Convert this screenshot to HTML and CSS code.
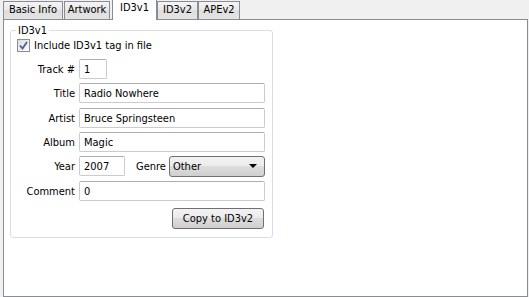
FILE: index.html
```html
<!DOCTYPE html>
<html lang="en">
<head>
    <meta charset="UTF-8">
    <title>Tag Editor - ID3v1</title>
    <link rel="stylesheet" href="styles.css">
</head>
<body>
    <div class="tabs">
        <div class="tab tab-basic">Basic Info</div>
        <div class="tab tab-artwork">Artwork</div>
        <div class="tab tab-active">ID3v1</div>
        <div class="tab tab-id3v2">ID3v2</div>
        <div class="tab tab-apev2">APEv2</div>
    </div>

    <div class="panel">
        <fieldset class="group">
            <legend>ID3v1</legend>

            <label class="check">
                <span class="box">
                    <svg width="9" height="9" viewBox="0 0 9 9">
                        <path d="M1 4.5 L3.5 7.5 L8 1" fill="none" stroke="#4a5f97" stroke-width="1.8"/>
                    </svg>
                </span>
                Include ID3v1 tag in file
            </label>

            <div class="row">
                <span class="lbl">Track #</span>
                <input class="field field-track" value="1">
            </div>
            <div class="row">
                <span class="lbl">Title</span>
                <input class="field field-wide" value="Radio Nowhere">
            </div>
            <div class="row row-loose">
                <span class="lbl">Artist</span>
                <input class="field field-wide" value="Bruce Springsteen">
            </div>
            <div class="row">
                <span class="lbl">Album</span>
                <input class="field field-wide" value="Magic">
            </div>
            <div class="row">
                <span class="lbl">Year</span>
                <input class="field field-year" value="2007">
                <span class="lbl-genre">Genre</span>
                <div class="combo">
                    <span>Other</span>
                    <span class="arrow"></span>
                </div>
            </div>
            <div class="row row-loose">
                <span class="lbl">Comment</span>
                <input class="field field-wide" value="0">
            </div>

            <div class="actions">
                <button class="btn">Copy to ID3v2</button>
            </div>
        </fieldset>
    </div>
</body>
</html>
```

FILE: styles.css
```css
body {
    margin: 0;
    width: 529px;
    height: 297px;
    background-color: #f0f0f0;
    font-family: 'DejaVu Sans Condensed', 'Liberation Sans', sans-serif;
    font-size: 11px;
    color: #000;
    overflow: hidden;
}

/* tab strip */
.tabs {
    display: flex;
    align-items: flex-end;
    height: 19px;
    padding-left: 3px;
    position: relative;
    z-index: 1;
}
.tab {
    box-sizing: border-box;
    height: 18px;
    border: 1px solid #898c95;
    border-bottom: none;
    background: linear-gradient(#f4f4f4, #e8e8e8 50%, #dedede 50%, #e4e4e4);
    text-align: center;
    line-height: 16px;
}
.tab-basic { width: 60px; margin-right: 1px; }
.tab-artwork { width: 46px; margin-right: 2px; }
.tab-active {
    width: 45px;
    height: 20px;
    background: #fff;
    line-height: 15px;
    margin-bottom: -1px;
    height: 21px;
}
.tab-id3v2 { width: 41px; }
.tab-apev2 { width: 42px; }

/* page body */
.panel {
    box-sizing: border-box;
    margin-left: 3px;
    width: 525px;
    height: 278px;
    border: 1px solid #898c95;
    background-color: #fff;
    padding: 4px 0 0 6px;
}

.group {
    box-sizing: border-box;
    width: 263px;
    height: 214px;
    margin: 0;
    padding: 0 0 0 0;
    border: 1px solid #d5dfe5;
    border-radius: 3px;
}
.group legend {
    padding: 0 2px;
    margin-left: 5px;
    line-height: 13px;
}

.check {
    display: flex;
    align-items: center;
    gap: 4px;
    margin: 2px 0 0 6px;
    height: 13px;
}
.box {
    box-sizing: border-box;
    width: 13px;
    height: 13px;
    border: 1px solid #8e8f8f;
    background: linear-gradient(135deg, #dcdcdc, #fefefe);
    display: flex;
    align-items: center;
    justify-content: center;
}

.row {
    display: flex;
    align-items: center;
    margin-top: 4px;
    height: 20px;
}
.check + .row { margin-top: 7px; }
.row-loose { margin-top: 5px; }

.lbl {
    width: 64px;
    text-align: right;
    margin-right: 4px;
}

.field {
    box-sizing: border-box;
    height: 20px;
    border: 1px solid #c8cdd2;
    border-top-color: #abadb3;
    border-radius: 2px;
    padding: 0 0 0 4px;
    font: inherit;
    color: #000;
    background: #fff;
    outline: none;
}
.field-track { width: 28px; }
.field-wide { width: 186px; }
.field-year { width: 46px; }

.lbl-genre {
    margin: 0 3px 0 11px;
}

.combo {
    box-sizing: border-box;
    width: 96px;
    height: 21px;
    border: 1px solid #707070;
    border-radius: 3px;
    background: linear-gradient(#f2f2f2, #ebebeb 50%, #dddddd 50%, #cfcfcf);
    display: flex;
    align-items: center;
    justify-content: space-between;
    padding: 0 7px 0 3px;
}
.arrow {
    width: 0;
    height: 0;
    border-left: 4px solid transparent;
    border-right: 4px solid transparent;
    border-top: 4px solid #000;
}

.actions {
    display: flex;
    justify-content: flex-end;
    margin-top: 7px;
    padding-right: 8px;
}
.btn {
    box-sizing: border-box;
    width: 92px;
    height: 21px;
    border: 1px solid #707070;
    border-radius: 3px;
    background: linear-gradient(#f2f2f2, #ebebeb 50%, #dddddd 50%, #cfcfcf);
    font: inherit;
    color: #000;
    padding: 0;
}
```
